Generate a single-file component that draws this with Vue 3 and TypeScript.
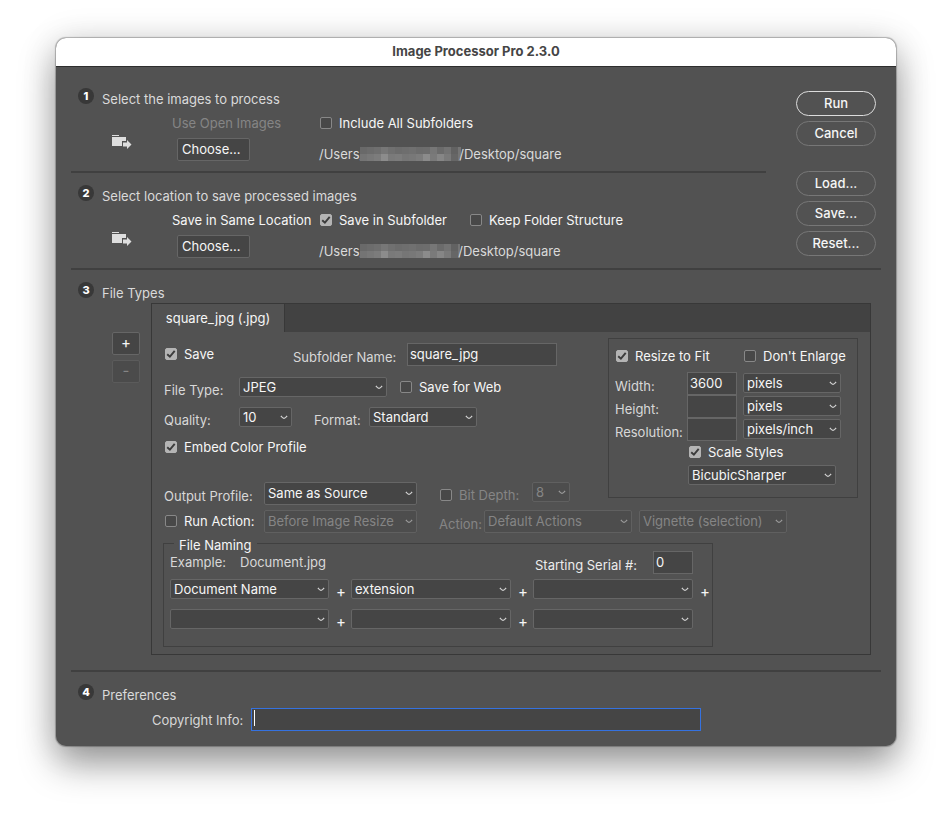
<script setup lang="ts">
import { ref } from 'vue'

const maskTop: string[] = ['#696969', '#6c6c6c', '#6f6f6f', '#777777', '#707070', '#6c6c6c', '#6e6e6e', '#707070', '#6c6c6c', '#6d6d6d', '#777777', '#6b6b6b', '#737373', '#626262', '#757575']
const maskBottom: string[] = ['#747474', '#787878', '#7c7c7c', '#8c8c8c', '#7a7a7a', '#7c7c7c', '#767676', '#787878', '#7c7c7c', '#8b8b8b', '#7a7a7a', '#868686', '#7a7a7a', '#666666', '#757575']

const includeSubfolders = ref(false)
const saveInSubfolder = ref(true)
const keepStructure = ref(false)
const saveType = ref(true)
const subfolderName = ref('square_jpg')
const saveForWeb = ref(false)
const embedProfile = ref(true)
const runAction = ref(false)
const resizeToFit = ref(true)
const dontEnlarge = ref(false)
const scaleStyles = ref(true)
const width = ref('3600')
const height = ref('')
const resolution = ref('')
const serial = ref('0')
const copyright = ref('')

const naming = ref<string[][]>([
  ['Document Name', 'extension', ''],
  ['', '', ''],
])
const namingOptions: string[] = ['', 'Document Name', 'extension']
</script>

<template>
  <main class="window">
    <header class="titlebar"><h1>Image Processor Pro 2.3.0</h1></header>
    <form class="content" @submit.prevent>
      <div class="top">
        <div class="steps">
          <section class="step first">
            <div class="head"><span class="badge">1</span><h2>Select the images to process</h2></div>
            <div class="source">
              <svg class="folder" width="20" height="15" viewBox="0 0 20 15" aria-hidden="true">
                <path d="M0 0h7v1H0zM0 2h14v4h-4v5H0z" fill="#dedede" />
                <path d="M11 7.500h4V5l4.500 4.500L15 14v-2.500h-4z" fill="#dedede" />
              </svg>
              <span class="dim">Use Open Images</span>
              <label class="check"><input v-model="includeSubfolders" type="checkbox" />Include All Subfolders</label>
              <button type="button" class="box choose">Choose...</button>
              <div class="path">
                <span>/Users/</span>
                <svg class="mask" width="101" height="14" viewBox="0 0 101 14" aria-hidden="true">
                  <rect v-for="(c, i) in maskTop" :key="'a' + i" :x="i * 7" y="0" width="7" height="7" :fill="c" />
                  <rect v-for="(c, i) in maskBottom" :key="'b' + i" :x="i * 7" y="7" width="7" height="7" :fill="c" />
                </svg>
                <span>/Desktop/square</span>
              </div>
            </div>
          </section>
          <section class="step">
            <div class="head"><span class="badge">2</span><h2>Select location to save processed images</h2></div>
            <div class="source">
              <svg class="folder" width="20" height="15" viewBox="0 0 20 15" aria-hidden="true">
                <path d="M0 0h7v1H0zM0 2h14v4h-4v5H0z" fill="#dedede" />
                <path d="M11 7.500h4V5l4.500 4.500L15 14v-2.500h-4z" fill="#dedede" />
              </svg>
              <span>Save in Same Location</span>
              <div class="checks">
                <label class="check"><input v-model="saveInSubfolder" type="checkbox" />Save in Subfolder</label>
                <label class="check"><input v-model="keepStructure" type="checkbox" />Keep Folder Structure</label>
              </div>
              <button type="button" class="box choose">Choose...</button>
              <div class="path">
                <span>/Users/</span>
                <svg class="mask" width="100" height="14" viewBox="0 0 100 14" aria-hidden="true">
                  <rect v-for="(c, i) in maskTop" :key="'a' + i" :x="i * 7" y="0" width="7" height="7" :fill="c" />
                  <rect v-for="(c, i) in maskBottom" :key="'b' + i" :x="i * 7" y="7" width="7" height="7" :fill="c" />
                </svg>
                <span>/Desktop/square</span>
              </div>
            </div>
          </section>
        </div>
        <div class="actions">
          <button type="submit" class="pill primary">Run</button>
          <button type="button" class="pill">Cancel</button>
          <button type="button" class="pill spaced">Load...</button>
          <button type="button" class="pill">Save...</button>
          <button type="button" class="pill">Reset...</button>
        </div>
      </div>

      <section class="step types">
        <div class="head"><span class="badge">3</span><h2>File Types</h2></div>
        <div class="types-body">
          <div class="side">
            <button type="button" class="box small" aria-label="Add">+</button>
            <button type="button" class="box small" aria-label="Remove" disabled>-</button>
          </div>
          <div class="panel">
            <div class="tabs"><button type="button" class="tab">square_jpg (.jpg)</button></div>
            <div class="panel-body">
              <div class="columns">
                <div class="settings">
                  <div class="row tall">
                    <label class="check save"><input v-model="saveType" type="checkbox" />Save</label>
                    <label class="lbl w114" for="subfolder">Subfolder Name:</label>
                    <input id="subfolder" v-model="subfolderName" class="field w150" type="text" />
                  </div>
                  <div class="row gap11">
                    <label class="lbl w75" for="ftype">File Type:</label>
                    <select id="ftype" class="w148"><option>JPEG</option></select>
                    <label class="check after"><input v-model="saveForWeb" type="checkbox" />Save for Web</label>
                  </div>
                  <div class="row gap10">
                    <label class="lbl w75" for="quality">Quality:</label>
                    <select id="quality" class="w53"><option>10</option></select>
                    <label class="lbl format" for="format">Format:</label>
                    <select id="format" class="w108"><option>Standard</option></select>
                  </div>
                  <div class="row gap10">
                    <label class="check inset"><input v-model="embedProfile" type="checkbox" />Embed Color Profile</label>
                  </div>
                  <div class="row tall gap25">
                    <label class="lbl w100" for="profile">Output Profile:</label>
                    <select id="profile" class="tall w153"><option>Same as Source</option></select>
                    <label class="check bits dim"><input type="checkbox" disabled />Bit Depth:</label>
                    <select class="w38 depth" aria-label="Bit Depth" disabled><option>8</option></select>
                  </div>
                </div>
                <div class="resize">
                  <div class="row">
                    <label class="check inset w128"><input v-model="resizeToFit" type="checkbox" />Resize to Fit</label>
                    <label class="check"><input v-model="dontEnlarge" type="checkbox" />Don't Enlarge</label>
                  </div>
                  <div class="sizes">
                    <label class="lbl" for="w">Width:</label>
                    <input id="w" v-model="width" class="field" type="text" />
                    <select aria-label="Width unit"><option>pixels</option></select>
                    <label class="lbl" for="h">Height:</label>
                    <input id="h" v-model="height" class="field" type="text" />
                    <select aria-label="Height unit"><option>pixels</option></select>
                    <label class="lbl" for="r">Resolution:</label>
                    <input id="r" v-model="resolution" class="field" type="text" />
                    <select aria-label="Resolution unit"><option>pixels/inch</option></select>
                  </div>
                  <div class="scale">
                    <label class="check inset"><input v-model="scaleStyles" type="checkbox" />Scale Styles</label>
                    <select class="w148" aria-label="Resampling"><option>BicubicSharper</option></select>
                  </div>
                </div>
              </div>
              <div class="row tall gap5">
                <label class="check inset lift w99"><input v-model="runAction" type="checkbox" />Run Action:</label>
                <select class="tall w153" aria-label="When to run" disabled><option>Before Image Resize</option></select>
                <label class="lbl dim action" for="aset">Action:</label>
                <select id="aset" class="tall w148" disabled><option>Default Actions</option></select>
                <select class="tall w148 gapleft" aria-label="Action name" disabled><option>Vignette (selection)</option></select>
              </div>
              <fieldset class="naming">
                <legend>File Naming</legend>
                <div class="row tall">
                  <span class="soft lift w70">Example:</span>
                  <span class="soft lift grow">Document.jpg</span>
                  <label class="lbl strong w118" for="serial">Starting Serial #:</label>
                  <input id="serial" v-model="serial" class="field w40" type="text" />
                </div>
                <div v-for="(line, r) in naming" :key="r" class="row parts">
                  <template v-for="(_, c) in line" :key="c">
                    <select v-model="line[c]" :aria-label="'Name part ' + (r * 3 + c + 1)">
                      <option v-for="o in namingOptions" :key="o" :value="o">{{ o }}</option>
                    </select>
                    <span class="plus">{{ r === 1 && c === 2 ? '' : '+' }}</span>
                  </template>
                </div>
              </fieldset>
            </div>
          </div>
        </div>
      </section>

      <section class="step prefs">
        <div class="head"><span class="badge">4</span><h2>Preferences</h2></div>
        <div class="row tall copy">
          <label class="soft w99" for="copyright">Copyright Info:</label>
          <div class="caret-wrap">
            <input id="copyright" v-model="copyright" class="field active" type="text" />
            <span class="caret" aria-hidden="true"></span>
          </div>
        </div>
      </section>
    </form>
  </main>
</template>

<style>
body {
  background: #fff;
}
</style>

<style scoped>
* {
  box-sizing: border-box;
}
.window {
  margin: 38px 56px 74px;
  border-radius: 10px;
  overflow: hidden;
  background: #525252;
  color: #f6f6f6;
  font: 400 13px/16px Inter, 'Liberation Sans', sans-serif;
  white-space: nowrap;
  box-shadow: 0 0 1px 1px rgba(0, 0, 0, 0.26), 0 18px 36px rgba(0, 0, 0, 0.38), 0 2px 36px rgba(0, 0, 0, 0.12);
}
.titlebar {
  height: 29px;
  background: #fff;
  border-bottom: 1px solid #2e2e2e;
}
h1 {
  margin: 0;
  font-size: 13px;
  font-weight: 700;
  line-height: 27px;
  text-align: center;
  color: #454545;
}
h2 {
  margin: 3px 0 0;
  font-size: 13px;
  font-weight: 400;
  line-height: 17px;
  color: #dadada;
}
.content {
  padding: 0 15px;
}
.top {
  display: flex;
  border-bottom: 2px solid #404040;
}
.steps {
  flex: 1;
}
.step {
  padding-top: 12px;
  padding-bottom: 10px;
}
.first {
  padding-top: 21px;
  border-bottom: 2px solid #404040;
}
.head {
  display: flex;
  gap: 8px;
  align-items: flex-start;
  height: 19px;
  padding-left: 7px;
}
.badge {
  width: 16px;
  height: 16px;
  border-radius: 50%;
  background: #383838;
  color: #fff;
  font-size: 11px;
  font-weight: 800;
  text-align: center;
}
.source {
  display: grid;
  grid-template-columns: 101px 148px 1fr;
  grid-template-rows: 20px 23px;
  row-gap: 5px;
  align-items: center;
  margin-top: 6px;
}
.folder {
  grid-row: 1 / 3;
  align-self: end;
  margin: 0 0 11px 41px;
}
.choose {
  width: 73px;
  height: 23px;
  margin-left: 5px;
}
.path {
  display: flex;
  align-items: center;
  align-self: end;
  height: 14px;
  margin-left: -1px;
  color: #dadada;
}
.mask {
  margin: 0 -2px 0 -4px;
}
.checks {
  display: flex;
}
.checks .check:first-child {
  width: 150px;
}
.actions {
  display: flex;
  flex-direction: column;
  gap: 5px;
  margin-left: 30px;
  padding: 24px 5px 0 0;
}
.pill {
  width: 80px;
  height: 25px;
  padding: 0 0 1px;
  border: 1px solid #777;
  border-radius: 13px;
  background: transparent;
  color: #f6f6f6;
  font: inherit;
  font-weight: 500;
}
.primary {
  border-color: #dcdcdc;
}
.spaced {
  margin-top: 20px;
}
.box {
  padding: 0 0 2px;
  border: 1px solid #666;
  border-radius: 2px;
  background: #454545;
  color: #f6f6f6;
  font: inherit;
}
.choose {
  padding-left: 4px;
  text-align: left;
}
.box:disabled {
  background: #4b4b4b;
  border-color: #5b5b5b;
  color: #858585;
}
.check {
  display: flex;
  align-items: center;
  gap: 7px;
}
.check input {
  appearance: none;
  flex: none;
  width: 12px;
  height: 12px;
  margin: 0;
  border: 1px solid #888;
  border-radius: 2px;
  background: #484848;
}
.check input:checked {
  border-color: #b4b4b4;
  background: #b4b4b4 url("data:image/svg+xml,%3Csvg xmlns='http://www.w3.org/2000/svg' viewBox='0 0 10 10'%3E%3Cpath d='M1.200 5.200 3.900 7.700 8.700 1.900' fill='none' stroke='%233c3c3c' stroke-width='1.900'/%3E%3C/svg%3E") center / 10px 10px no-repeat;
}
.dim,
.lbl.dim {
  color: #858585;
}
.types {
  padding-bottom: 15px;
  border-bottom: 2px solid #404040;
}
.types-body {
  display: flex;
  margin: 2px 10px 0 0;
}
.side {
  display: flex;
  flex-direction: column;
  gap: 5px;
  width: 80px;
  padding: 29px 0 0 41px;
}
.small {
  width: 28px;
  height: 23px;
  font-size: 15px;
}
.panel {
  flex: 1;
  border: 1px solid #383838;
}
.tabs {
  height: 28px;
  background: #424242;
}
.tab {
  width: 133px;
  height: 28px;
  padding: 0;
  border: 0;
  border-right: 1px solid #383838;
  background: #525252;
  color: #f6f6f6;
  font: inherit;
}
.panel-body {
  padding: 0 12px 7px;
}
.columns {
  display: flex;
  align-items: flex-start;
  justify-content: space-between;
}
.settings {
  padding-top: 11px;
}
.row {
  display: flex;
  align-items: center;
  height: 20px;
}
.row.tall {
  height: 23px;
}
.gap5 {
  margin-top: 5px;
}
.gap10 {
  margin-top: 10px;
}
.gap11 {
  margin-top: 11px;
}
.gap25 {
  margin-top: 25px;
}
.lbl {
  padding-top: 6px;
  color: #d8d8d8;
}
.row.tall .lbl {
  padding-top: 5px;
}
.lift {
  padding-bottom: 2px;
}
.soft {
  color: #d8d8d8;
}
.strong {
  color: #ececec;
}
.save {
  width: 128px;
  margin-left: 1px;
  padding-bottom: 2px;
}
.inset {
  margin-left: 1px;
}
.after {
  margin-left: 13px;
}
.format {
  width: 77px;
  padding-left: 22px;
}
.bits {
  width: 92px;
  margin-left: 23px;
  padding-top: 3px;
}
.action {
  width: 67px;
  padding-left: 22px;
}
.gapleft {
  margin-left: 7px;
}
.w38 { width: 38px; }
.w40 { width: 40px; }
.w53 { width: 53px; }
.w70 { width: 70px; }
.w75 { width: 75px; }
.w99 { width: 99px; }
.w100 { width: 100px; }
.w108 { width: 108px; }
.w114 { width: 114px; }
.w118 { width: 118px; }
.w128 { width: 128px; }
.w148 { width: 148px; }
.w150 { width: 150px; }
.w153 { width: 153px; }
.grow {
  flex: 1;
}
.field {
  height: 23px;
  padding: 0 2px 2px;
  border: 1px solid #666;
  border-radius: 0;
  outline: 0;
  background: #454545;
  color: #f6f6f6;
  font: inherit;
}
select {
  appearance: none;
  height: 20px;
  padding: 0 18px 0 3px;
  border: 1px solid #666;
  border-radius: 2px;
  background: #454545 url("data:image/svg+xml,%3Csvg xmlns='http://www.w3.org/2000/svg' viewBox='0 0 8 5'%3E%3Cpath d='M.8 1C2 2 3 3.300 4 3.300S6 2 7.200 1' fill='none' stroke='%23d0d0d0' stroke-width='1.200'/%3E%3C/svg%3E") right 3px center / 8px 5px no-repeat;
  color: #f6f6f6;
  font: inherit;
}
select.tall {
  height: 23px;
  padding-bottom: 1px;
}
select:disabled {
  border-color: #606060;
  background-color: #4d4d4d;
  background-image: url("data:image/svg+xml,%3Csvg xmlns='http://www.w3.org/2000/svg' viewBox='0 0 8 5'%3E%3Cpath d='M.8 1C2 2 3 3.300 4 3.300S6 2 7.200 1' fill='none' stroke='%23999999' stroke-width='1.200'/%3E%3C/svg%3E");
  color: #858585;
  opacity: 1;
}
.depth {
  align-self: flex-start;
}
.resize {
  width: 250px;
  margin-top: 6px;
  padding: 7px 6px 12px;
  border: 1px solid #404040;
}
.sizes {
  display: grid;
  grid-template-columns: 72px 50px 98px;
  grid-auto-rows: 23px;
  margin-top: 6px;
}
.sizes .field {
  width: 50px;
}
.sizes .lbl {
  line-height: 17px;
}
.sizes select {
  width: 98px;
  margin: 1px 0 0 6px;
}
.scale {
  display: grid;
  gap: 3px;
  grid-template-rows: 20px 20px;
  padding: 1px 0 0 73px;
}
.naming {
  width: 550px;
  margin: 2px 0 0 -1px;
  padding: 0 0 17px 6px;
  border: 1px solid #404040;
}
legend {
  margin-left: 4px;
  padding: 4px 5px 0;
  line-height: 12px;
}
.naming .row.tall {
  padding-right: 19px;
}
.parts {
  margin-top: 5px;
}
.parts + .parts {
  margin-top: 10px;
}
.parts select {
  flex: none;
  width: 160px;
}
.parts select:first-child {
  width: 159px;
}
.plus {
  flex: none;
  width: 8px;
  margin: 0 7px;
  padding-top: 5px;
  font-size: 15px;
  line-height: 16px;
}
.plus:last-child {
  margin-right: 0;
}
.prefs {
  padding-bottom: 15px;
}
.copy {
  margin-top: 5px;
  padding-left: 81px;
}
.caret-wrap {
  position: relative;
  width: 450px;
}
.active {
  display: block;
  width: 100%;
  border-color: #3572e0;
}
.caret {
  position: absolute;
  left: 3px;
  top: 2px;
  width: 1px;
  height: 16px;
  background: #fff;
}
</style>
